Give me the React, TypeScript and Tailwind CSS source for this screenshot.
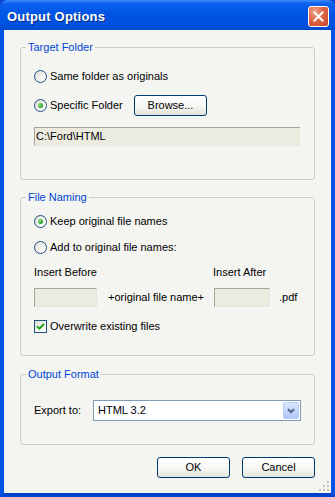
import React from 'react';

const font = { fontFamily: '"Liberation Sans", Arial, sans-serif' };

function Radio({ checked = false }: { checked?: boolean }) {
  return (
    <span className="flex h-[13px] w-[13px] shrink-0 items-center justify-center rounded-full border border-[#1c5180] bg-[linear-gradient(135deg,#dcdcd4_0%,#f4f4f0_55%,#ffffff_100%)]">
      {checked && (
        <span className="h-[5px] w-[5px] rounded-full bg-[radial-gradient(circle_at_35%_35%,#8ee28a_0%,#2fa82c_60%,#1e8c1e_100%)]" />
      )}
    </span>
  );
}

function Checkbox({ checked = false }: { checked?: boolean }) {
  return (
    <span className="flex h-[13px] w-[13px] shrink-0 items-center justify-center border border-[#1c5180] bg-[linear-gradient(135deg,#dcdcd4_0%,#f4f4f0_55%,#ffffff_100%)]">
      {checked && (
        <svg width="9" height="9" viewBox="0 0 9 9">
          <path d="M1 4.2 L3.4 6.6 L8 2" fill="none" stroke="#21a121" strokeWidth="2" />
        </svg>
      )}
    </span>
  );
}

function GroupBox({ title, className, children }: { title: string; className: string; children: React.ReactNode }) {
  return (
    <div className={`relative mx-[16px] rounded-[3px] border border-[#d0d0bf] pl-[13px] ${className}`}>
      {/* caption sits over the top border */}
      <span className="absolute -top-[8px] left-[5px] bg-[#f4f4f1] px-[2px] text-[11px] leading-[14px] text-[#0046d5]">
        {title}
      </span>
      {children}
    </div>
  );
}

function XpButton({ label, className = '' }: { label: string; className?: string }) {
  return (
    <div
      className={`flex h-[21px] w-[73px] items-center justify-center rounded-[3px] border border-[#003c74] bg-[linear-gradient(to_bottom,#ffffff_0%,#f5f5f2_60%,#e3e2da_100%)] text-[11px] text-black ${className}`}
    >
      {label}
    </div>
  );
}

export default function App() {
  return (
    <div className="flex h-[497px] w-[335px] flex-col overflow-hidden bg-[#0a3fd0]" style={font}>
      {/* Title bar */}
      <div className="flex h-[30px] shrink-0 items-center justify-between rounded-t-[7px] bg-[linear-gradient(to_bottom,#3b8bf8_0%,#0b61ee_12%,#0055e5_45%,#0052e0_80%,#0049cf_100%)] pl-[7px] pr-[6px]">
        <span className="pt-[3px] text-[13px] font-bold tracking-[0.2px] text-white [text-shadow:1px_1px_0_#0a2a80]">
          Output Options
        </span>
        <div className="mt-[2px] flex h-[21px] w-[21px] items-center justify-center rounded-[3px] border border-white bg-[radial-gradient(circle_at_30%_25%,#f0a48a_0%,#e06a48_40%,#c9452a_100%)]">
          <svg width="11" height="11" viewBox="0 0 11 11">
            <path d="M1.5 1.5 L9.5 9.5 M9.5 1.5 L1.5 9.5" stroke="white" strokeWidth="2" strokeLinecap="square" />
          </svg>
        </div>
      </div>

      {/* Frame + client area */}
      <div className="flex flex-1 border-x-[4px] border-b-[4px] border-x-[#0054e3] border-b-[#0042c8]">
        <div className="relative flex flex-1 flex-col bg-[#f4f4f1] text-[11px] text-black">
          <GroupBox title="Target Folder" className="mt-[17px] h-[133px] pt-[20px]">
            <div className="flex h-[16px] items-center gap-[3px]">
              <Radio />
              <span>Same folder as originals</span>
            </div>
            <div className="mt-[11px] flex h-[21px] items-center">
              <Radio checked />
              <span className="ml-[3px] w-[84px]">Specific Folder</span>
              <XpButton label="Browse..." />
            </div>
            <div className="mt-[11px] flex h-[19px] w-[266px] items-center border border-[#a5a597] border-b-[#e8e7df] border-r-[#e8e7df] bg-[#ecebe0] pl-[1px]">
              C:\Ford\HTML
            </div>
          </GroupBox>

          <GroupBox title="File Naming" className="mt-[17px] h-[159px] pt-[15px]">
            <div className="flex h-[16px] items-center gap-[3px]">
              <Radio checked />
              <span>Keep original file names</span>
            </div>
            <div className="mt-[10px] flex h-[16px] items-center gap-[3px]">
              <Radio />
              <span>Add to original file names:</span>
            </div>
            <div className="mt-[11px] flex h-[13px] items-center">
              <span className="w-[179px]">Insert Before</span>
              <span>Insert After</span>
            </div>
            <div className="mt-[9px] flex h-[19px] items-center">
              <div className="h-[19px] w-[63px] border border-[#a5a597] border-b-[#e8e7df] border-r-[#e8e7df] bg-[#ecebe0]" />
              <span className="ml-[11px] w-[106px]">+original file name+</span>
              <div className="h-[19px] w-[56px] border border-[#a5a597] border-b-[#e8e7df] border-r-[#e8e7df] bg-[#ecebe0]" />
              <span className="ml-[9px]">.pdf</span>
            </div>
            <div className="mt-[11px] flex h-[16px] items-center gap-[3px]">
              <Checkbox checked />
              <span>Overwrite existing files</span>
            </div>
          </GroupBox>

          <GroupBox title="Output Format" className="mt-[18px] h-[71px] pt-[25px]">
            <div className="flex h-[21px] items-center">
              <span className="w-[59px]">Export to:</span>
              <div className="flex h-[21px] w-[208px] items-center justify-between border border-[#7f9db9] bg-white pl-[4px] pr-[1px]">
                <span>HTML 3.2</span>
                <div className="flex h-[17px] w-[16px] items-center justify-center rounded-[2px] border border-[#b8cbf5] bg-[linear-gradient(to_bottom,#dce7fd_0%,#c1d3fb_60%,#b0c6f8_100%)]">
                  <svg width="8" height="6" viewBox="0 0 8 6">
                    <path d="M1 1.2 L4 4.2 L7 1.2" fill="none" stroke="#4d6185" strokeWidth="2" />
                  </svg>
                </div>
              </div>
            </div>
          </GroupBox>

          <div className="mr-[16px] mt-[12px] flex justify-end gap-[12px]">
            <XpButton label="OK" />
            <XpButton label="Cancel" />
          </div>

          {/* size grip */}
          <svg className="absolute bottom-[1px] right-[1px]" width="12" height="12" viewBox="0 0 12 12">
            {[
              [9, 1],
              [9, 5],
              [5, 5],
              [9, 9],
              [5, 9],
              [1, 9],
            ].map(([x, y], i) => (
              <g key={i}>
                <rect x={x + 1} y={y + 1} width="2" height="2" fill="#ffffff" />
                <rect x={x} y={y} width="2" height="2" fill="#c5c2b2" />
              </g>
            ))}
          </svg>
        </div>
      </div>
    </div>
  );
}
